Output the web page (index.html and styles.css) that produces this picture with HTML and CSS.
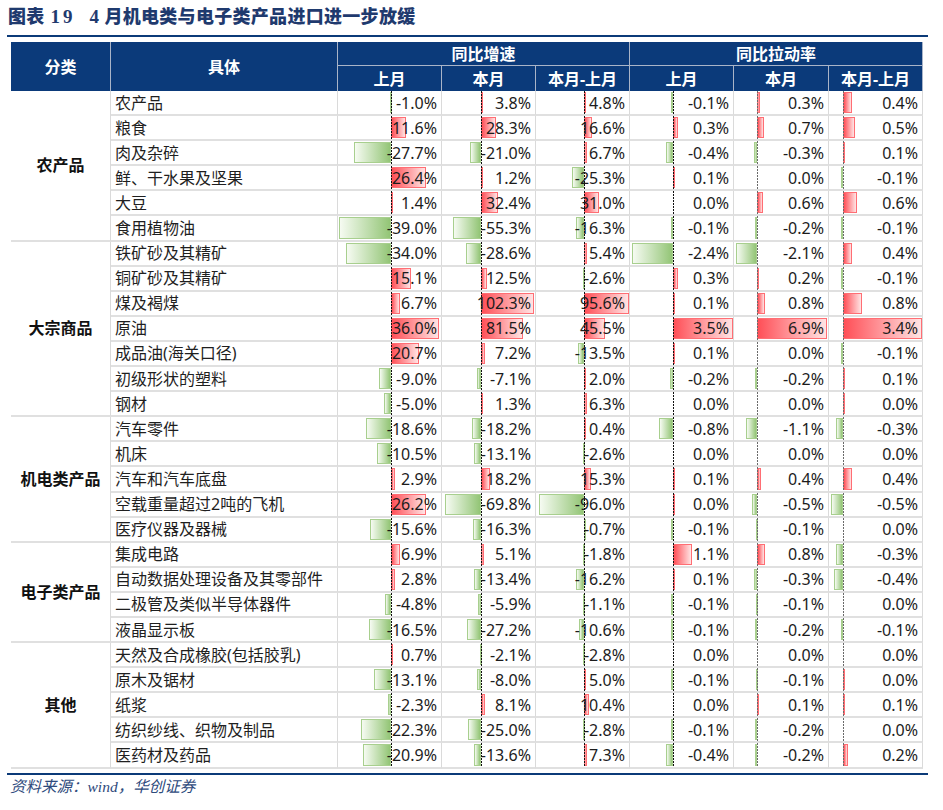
FILE: index.html
```html
<!DOCTYPE html>
<html lang="zh-CN">
<head>
<meta charset="utf-8">
<title>图表 19 4月机电类与电子类产品进口进一步放缓</title>
<link rel="stylesheet" href="styles.css">
</head>
<body>
<div class="page">
  <h1 class="title"><span>图表</span><span class="n1">19</span><span class="n2">4</span>月机电类与电子类产品进口进一步放缓</h1>
  <div class="fig">
    <table class="tbl">
      <colgroup>
        <col class="w-cat"><col class="w-item"><col class="w-a"><col class="w-b"><col class="w-b"><col class="w-a"><col class="w-c"><col class="w-b">
      </colgroup>
      <thead>
        <tr class="h1"><th rowspan="2">分类</th><th rowspan="2">具体</th><th colspan="3" class="grp">同比增速</th><th colspan="3" class="grp">同比拉动率</th></tr>
        <tr class="h2"><th>上月</th><th>本月</th><th>本月-上月</th><th>上月</th><th>本月</th><th>本月-上月</th></tr>
      </thead>
      <tbody>
        <tr class="r"><td class="cat" rowspan="6">农产品</td><td class="item">农产品</td>
          <td class="c1"><div class="dc"><i class="bar neg" style="--v:1.0"></i><i class="ax"></i><span class="val">-1.0%</span></div></td>
          <td class="c2"><div class="dc"><i class="bar pos" style="--v:3.8"></i><i class="ax"></i><span class="val">3.8%</span></div></td>
          <td class="c3"><div class="dc"><i class="bar pos" style="--v:4.8"></i><i class="ax"></i><span class="val">4.8%</span></div></td>
          <td class="c4"><div class="dc"><i class="bar neg" style="--v:0.1"></i><i class="ax"></i><span class="val">-0.1%</span></div></td>
          <td class="c5"><div class="dc"><i class="bar pos" style="--v:0.3"></i><i class="ax"></i><span class="val">0.3%</span></div></td>
          <td class="c6"><div class="dc"><i class="bar pos" style="--v:0.4"></i><i class="ax"></i><span class="val">0.4%</span></div></td></tr>
        <tr class="r"><td class="item">粮食</td>
          <td class="c1"><div class="dc"><i class="bar pos" style="--v:11.6"></i><i class="ax"></i><span class="val">11.6%</span></div></td>
          <td class="c2"><div class="dc"><i class="bar pos" style="--v:28.3"></i><i class="ax"></i><span class="val">28.3%</span></div></td>
          <td class="c3"><div class="dc"><i class="bar pos" style="--v:16.6"></i><i class="ax"></i><span class="val">16.6%</span></div></td>
          <td class="c4"><div class="dc"><i class="bar pos" style="--v:0.3"></i><i class="ax"></i><span class="val">0.3%</span></div></td>
          <td class="c5"><div class="dc"><i class="bar pos" style="--v:0.7"></i><i class="ax"></i><span class="val">0.7%</span></div></td>
          <td class="c6"><div class="dc"><i class="bar pos" style="--v:0.5"></i><i class="ax"></i><span class="val">0.5%</span></div></td></tr>
        <tr class="r"><td class="item">肉及杂碎</td>
          <td class="c1"><div class="dc"><i class="bar neg" style="--v:27.7"></i><i class="ax"></i><span class="val">-27.7%</span></div></td>
          <td class="c2"><div class="dc"><i class="bar neg" style="--v:21.0"></i><i class="ax"></i><span class="val">-21.0%</span></div></td>
          <td class="c3"><div class="dc"><i class="bar pos" style="--v:6.7"></i><i class="ax"></i><span class="val">6.7%</span></div></td>
          <td class="c4"><div class="dc"><i class="bar neg" style="--v:0.4"></i><i class="ax"></i><span class="val">-0.4%</span></div></td>
          <td class="c5"><div class="dc"><i class="bar neg" style="--v:0.3"></i><i class="ax"></i><span class="val">-0.3%</span></div></td>
          <td class="c6"><div class="dc"><i class="bar pos" style="--v:0.1"></i><i class="ax"></i><span class="val">0.1%</span></div></td></tr>
        <tr class="r"><td class="item">鲜、干水果及坚果</td>
          <td class="c1"><div class="dc"><i class="bar pos" style="--v:26.4"></i><i class="ax"></i><span class="val">26.4%</span></div></td>
          <td class="c2"><div class="dc"><i class="bar pos" style="--v:1.2"></i><i class="ax"></i><span class="val">1.2%</span></div></td>
          <td class="c3"><div class="dc"><i class="bar neg" style="--v:25.3"></i><i class="ax"></i><span class="val">-25.3%</span></div></td>
          <td class="c4"><div class="dc"><i class="bar pos" style="--v:0.1"></i><i class="ax"></i><span class="val">0.1%</span></div></td>
          <td class="c5"><div class="dc"><i class="ax"></i><span class="val">0.0%</span></div></td>
          <td class="c6"><div class="dc"><i class="bar neg" style="--v:0.1"></i><i class="ax"></i><span class="val">-0.1%</span></div></td></tr>
        <tr class="r"><td class="item">大豆</td>
          <td class="c1"><div class="dc"><i class="bar pos" style="--v:1.4"></i><i class="ax"></i><span class="val">1.4%</span></div></td>
          <td class="c2"><div class="dc"><i class="bar pos" style="--v:32.4"></i><i class="ax"></i><span class="val">32.4%</span></div></td>
          <td class="c3"><div class="dc"><i class="bar pos" style="--v:31.0"></i><i class="ax"></i><span class="val">31.0%</span></div></td>
          <td class="c4"><div class="dc"><i class="ax"></i><span class="val">0.0%</span></div></td>
          <td class="c5"><div class="dc"><i class="bar pos" style="--v:0.6"></i><i class="ax"></i><span class="val">0.6%</span></div></td>
          <td class="c6"><div class="dc"><i class="bar pos" style="--v:0.6"></i><i class="ax"></i><span class="val">0.6%</span></div></td></tr>
        <tr class="r"><td class="item">食用植物油</td>
          <td class="c1"><div class="dc"><i class="bar neg" style="--v:39.0"></i><i class="ax"></i><span class="val">-39.0%</span></div></td>
          <td class="c2"><div class="dc"><i class="bar neg" style="--v:55.3"></i><i class="ax"></i><span class="val">-55.3%</span></div></td>
          <td class="c3"><div class="dc"><i class="bar neg" style="--v:16.3"></i><i class="ax"></i><span class="val">-16.3%</span></div></td>
          <td class="c4"><div class="dc"><i class="bar neg" style="--v:0.1"></i><i class="ax"></i><span class="val">-0.1%</span></div></td>
          <td class="c5"><div class="dc"><i class="bar neg" style="--v:0.2"></i><i class="ax"></i><span class="val">-0.2%</span></div></td>
          <td class="c6"><div class="dc"><i class="bar neg" style="--v:0.1"></i><i class="ax"></i><span class="val">-0.1%</span></div></td></tr>

        <tr class="r"><td class="cat" rowspan="7">大宗商品</td><td class="item">铁矿砂及其精矿</td>
          <td class="c1"><div class="dc"><i class="bar neg" style="--v:34.0"></i><i class="ax"></i><span class="val">-34.0%</span></div></td>
          <td class="c2"><div class="dc"><i class="bar neg" style="--v:28.6"></i><i class="ax"></i><span class="val">-28.6%</span></div></td>
          <td class="c3"><div class="dc"><i class="bar pos" style="--v:5.4"></i><i class="ax"></i><span class="val">5.4%</span></div></td>
          <td class="c4"><div class="dc"><i class="bar neg" style="--v:2.4"></i><i class="ax"></i><span class="val">-2.4%</span></div></td>
          <td class="c5"><div class="dc"><i class="bar neg" style="--v:2.1"></i><i class="ax"></i><span class="val">-2.1%</span></div></td>
          <td class="c6"><div class="dc"><i class="bar pos" style="--v:0.4"></i><i class="ax"></i><span class="val">0.4%</span></div></td></tr>
        <tr class="r"><td class="item">铜矿砂及其精矿</td>
          <td class="c1"><div class="dc"><i class="bar pos" style="--v:15.1"></i><i class="ax"></i><span class="val">15.1%</span></div></td>
          <td class="c2"><div class="dc"><i class="bar pos" style="--v:12.5"></i><i class="ax"></i><span class="val">12.5%</span></div></td>
          <td class="c3"><div class="dc"><i class="bar neg" style="--v:2.6"></i><i class="ax"></i><span class="val">-2.6%</span></div></td>
          <td class="c4"><div class="dc"><i class="bar pos" style="--v:0.3"></i><i class="ax"></i><span class="val">0.3%</span></div></td>
          <td class="c5"><div class="dc"><i class="bar pos" style="--v:0.2"></i><i class="ax"></i><span class="val">0.2%</span></div></td>
          <td class="c6"><div class="dc"><i class="bar neg" style="--v:0.1"></i><i class="ax"></i><span class="val">-0.1%</span></div></td></tr>
        <tr class="r"><td class="item">煤及褐煤</td>
          <td class="c1"><div class="dc"><i class="bar pos" style="--v:6.7"></i><i class="ax"></i><span class="val">6.7%</span></div></td>
          <td class="c2"><div class="dc"><i class="bar pos" style="--v:102.3"></i><i class="ax"></i><span class="val">102.3%</span></div></td>
          <td class="c3"><div class="dc"><i class="bar pos" style="--v:95.6"></i><i class="ax"></i><span class="val">95.6%</span></div></td>
          <td class="c4"><div class="dc"><i class="bar pos" style="--v:0.1"></i><i class="ax"></i><span class="val">0.1%</span></div></td>
          <td class="c5"><div class="dc"><i class="bar pos" style="--v:0.8"></i><i class="ax"></i><span class="val">0.8%</span></div></td>
          <td class="c6"><div class="dc"><i class="bar pos" style="--v:0.8"></i><i class="ax"></i><span class="val">0.8%</span></div></td></tr>
        <tr class="r"><td class="item">原油</td>
          <td class="c1"><div class="dc"><i class="bar pos" style="--v:36.0"></i><i class="ax"></i><span class="val">36.0%</span></div></td>
          <td class="c2"><div class="dc"><i class="bar pos" style="--v:81.5"></i><i class="ax"></i><span class="val">81.5%</span></div></td>
          <td class="c3"><div class="dc"><i class="bar pos" style="--v:45.5"></i><i class="ax"></i><span class="val">45.5%</span></div></td>
          <td class="c4"><div class="dc"><i class="bar pos" style="--v:3.5"></i><i class="ax"></i><span class="val">3.5%</span></div></td>
          <td class="c5"><div class="dc"><i class="bar pos" style="--v:6.9"></i><i class="ax"></i><span class="val">6.9%</span></div></td>
          <td class="c6"><div class="dc"><i class="bar pos" style="--v:3.4"></i><i class="ax"></i><span class="val">3.4%</span></div></td></tr>
        <tr class="r"><td class="item">成品油(海关口径)</td>
          <td class="c1"><div class="dc"><i class="bar pos" style="--v:20.7"></i><i class="ax"></i><span class="val">20.7%</span></div></td>
          <td class="c2"><div class="dc"><i class="bar pos" style="--v:7.2"></i><i class="ax"></i><span class="val">7.2%</span></div></td>
          <td class="c3"><div class="dc"><i class="bar neg" style="--v:13.5"></i><i class="ax"></i><span class="val">-13.5%</span></div></td>
          <td class="c4"><div class="dc"><i class="bar pos" style="--v:0.1"></i><i class="ax"></i><span class="val">0.1%</span></div></td>
          <td class="c5"><div class="dc"><i class="ax"></i><span class="val">0.0%</span></div></td>
          <td class="c6"><div class="dc"><i class="bar neg" style="--v:0.1"></i><i class="ax"></i><span class="val">-0.1%</span></div></td></tr>
        <tr class="r"><td class="item">初级形状的塑料</td>
          <td class="c1"><div class="dc"><i class="bar neg" style="--v:9.0"></i><i class="ax"></i><span class="val">-9.0%</span></div></td>
          <td class="c2"><div class="dc"><i class="bar neg" style="--v:7.1"></i><i class="ax"></i><span class="val">-7.1%</span></div></td>
          <td class="c3"><div class="dc"><i class="bar pos" style="--v:2.0"></i><i class="ax"></i><span class="val">2.0%</span></div></td>
          <td class="c4"><div class="dc"><i class="bar neg" style="--v:0.2"></i><i class="ax"></i><span class="val">-0.2%</span></div></td>
          <td class="c5"><div class="dc"><i class="bar neg" style="--v:0.2"></i><i class="ax"></i><span class="val">-0.2%</span></div></td>
          <td class="c6"><div class="dc"><i class="bar pos" style="--v:0.1"></i><i class="ax"></i><span class="val">0.1%</span></div></td></tr>
        <tr class="r"><td class="item">钢材</td>
          <td class="c1"><div class="dc"><i class="bar neg" style="--v:5.0"></i><i class="ax"></i><span class="val">-5.0%</span></div></td>
          <td class="c2"><div class="dc"><i class="bar pos" style="--v:1.3"></i><i class="ax"></i><span class="val">1.3%</span></div></td>
          <td class="c3"><div class="dc"><i class="bar pos" style="--v:6.3"></i><i class="ax"></i><span class="val">6.3%</span></div></td>
          <td class="c4"><div class="dc"><i class="ax"></i><span class="val">0.0%</span></div></td>
          <td class="c5"><div class="dc"><i class="ax"></i><span class="val">0.0%</span></div></td>
          <td class="c6"><div class="dc"><i class="bar pos" style="--v:0.04"></i><i class="ax"></i><span class="val">0.0%</span></div></td></tr>

        <tr class="r"><td class="cat" rowspan="5">机电类产品</td><td class="item">汽车零件</td>
          <td class="c1"><div class="dc"><i class="bar neg" style="--v:18.6"></i><i class="ax"></i><span class="val">-18.6%</span></div></td>
          <td class="c2"><div class="dc"><i class="bar neg" style="--v:18.2"></i><i class="ax"></i><span class="val">-18.2%</span></div></td>
          <td class="c3"><div class="dc"><i class="bar pos" style="--v:0.4"></i><i class="ax"></i><span class="val">0.4%</span></div></td>
          <td class="c4"><div class="dc"><i class="bar neg" style="--v:0.8"></i><i class="ax"></i><span class="val">-0.8%</span></div></td>
          <td class="c5"><div class="dc"><i class="bar neg" style="--v:1.1"></i><i class="ax"></i><span class="val">-1.1%</span></div></td>
          <td class="c6"><div class="dc"><i class="bar neg" style="--v:0.3"></i><i class="ax"></i><span class="val">-0.3%</span></div></td></tr>
        <tr class="r"><td class="item">机床</td>
          <td class="c1"><div class="dc"><i class="bar neg" style="--v:10.5"></i><i class="ax"></i><span class="val">-10.5%</span></div></td>
          <td class="c2"><div class="dc"><i class="bar neg" style="--v:13.1"></i><i class="ax"></i><span class="val">-13.1%</span></div></td>
          <td class="c3"><div class="dc"><i class="bar neg" style="--v:2.6"></i><i class="ax"></i><span class="val">-2.6%</span></div></td>
          <td class="c4"><div class="dc"><i class="ax"></i><span class="val">0.0%</span></div></td>
          <td class="c5"><div class="dc"><i class="ax"></i><span class="val">0.0%</span></div></td>
          <td class="c6"><div class="dc"><i class="ax"></i><span class="val">0.0%</span></div></td></tr>
        <tr class="r"><td class="item">汽车和汽车底盘</td>
          <td class="c1"><div class="dc"><i class="bar pos" style="--v:2.9"></i><i class="ax"></i><span class="val">2.9%</span></div></td>
          <td class="c2"><div class="dc"><i class="bar pos" style="--v:18.2"></i><i class="ax"></i><span class="val">18.2%</span></div></td>
          <td class="c3"><div class="dc"><i class="bar pos" style="--v:15.3"></i><i class="ax"></i><span class="val">15.3%</span></div></td>
          <td class="c4"><div class="dc"><i class="bar pos" style="--v:0.1"></i><i class="ax"></i><span class="val">0.1%</span></div></td>
          <td class="c5"><div class="dc"><i class="bar pos" style="--v:0.4"></i><i class="ax"></i><span class="val">0.4%</span></div></td>
          <td class="c6"><div class="dc"><i class="bar pos" style="--v:0.4"></i><i class="ax"></i><span class="val">0.4%</span></div></td></tr>
        <tr class="r"><td class="item">空载重量超过2吨的飞机</td>
          <td class="c1"><div class="dc"><i class="bar pos" style="--v:26.2"></i><i class="ax"></i><span class="val">26.2%</span></div></td>
          <td class="c2"><div class="dc"><i class="bar neg" style="--v:69.8"></i><i class="ax"></i><span class="val">-69.8%</span></div></td>
          <td class="c3"><div class="dc"><i class="bar neg" style="--v:96.0"></i><i class="ax"></i><span class="val">-96.0%</span></div></td>
          <td class="c4"><div class="dc"><i class="bar pos" style="--v:0.04"></i><i class="ax"></i><span class="val">0.0%</span></div></td>
          <td class="c5"><div class="dc"><i class="bar neg" style="--v:0.5"></i><i class="ax"></i><span class="val">-0.5%</span></div></td>
          <td class="c6"><div class="dc"><i class="bar neg" style="--v:0.5"></i><i class="ax"></i><span class="val">-0.5%</span></div></td></tr>
        <tr class="r"><td class="item">医疗仪器及器械</td>
          <td class="c1"><div class="dc"><i class="bar neg" style="--v:15.6"></i><i class="ax"></i><span class="val">-15.6%</span></div></td>
          <td class="c2"><div class="dc"><i class="bar neg" style="--v:16.3"></i><i class="ax"></i><span class="val">-16.3%</span></div></td>
          <td class="c3"><div class="dc"><i class="bar neg" style="--v:0.7"></i><i class="ax"></i><span class="val">-0.7%</span></div></td>
          <td class="c4"><div class="dc"><i class="bar neg" style="--v:0.1"></i><i class="ax"></i><span class="val">-0.1%</span></div></td>
          <td class="c5"><div class="dc"><i class="bar neg" style="--v:0.1"></i><i class="ax"></i><span class="val">-0.1%</span></div></td>
          <td class="c6"><div class="dc"><i class="ax"></i><span class="val">0.0%</span></div></td></tr>

        <tr class="r"><td class="cat" rowspan="4">电子类产品</td><td class="item">集成电路</td>
          <td class="c1"><div class="dc"><i class="bar pos" style="--v:6.9"></i><i class="ax"></i><span class="val">6.9%</span></div></td>
          <td class="c2"><div class="dc"><i class="bar pos" style="--v:5.1"></i><i class="ax"></i><span class="val">5.1%</span></div></td>
          <td class="c3"><div class="dc"><i class="bar neg" style="--v:1.8"></i><i class="ax"></i><span class="val">-1.8%</span></div></td>
          <td class="c4"><div class="dc"><i class="bar pos" style="--v:1.1"></i><i class="ax"></i><span class="val">1.1%</span></div></td>
          <td class="c5"><div class="dc"><i class="bar pos" style="--v:0.8"></i><i class="ax"></i><span class="val">0.8%</span></div></td>
          <td class="c6"><div class="dc"><i class="bar neg" style="--v:0.3"></i><i class="ax"></i><span class="val">-0.3%</span></div></td></tr>
        <tr class="r"><td class="item">自动数据处理设备及其零部件</td>
          <td class="c1"><div class="dc"><i class="bar pos" style="--v:2.8"></i><i class="ax"></i><span class="val">2.8%</span></div></td>
          <td class="c2"><div class="dc"><i class="bar neg" style="--v:13.4"></i><i class="ax"></i><span class="val">-13.4%</span></div></td>
          <td class="c3"><div class="dc"><i class="bar neg" style="--v:16.2"></i><i class="ax"></i><span class="val">-16.2%</span></div></td>
          <td class="c4"><div class="dc"><i class="bar pos" style="--v:0.1"></i><i class="ax"></i><span class="val">0.1%</span></div></td>
          <td class="c5"><div class="dc"><i class="bar neg" style="--v:0.3"></i><i class="ax"></i><span class="val">-0.3%</span></div></td>
          <td class="c6"><div class="dc"><i class="bar neg" style="--v:0.4"></i><i class="ax"></i><span class="val">-0.4%</span></div></td></tr>
        <tr class="r"><td class="item">二极管及类似半导体器件</td>
          <td class="c1"><div class="dc"><i class="bar neg" style="--v:4.8"></i><i class="ax"></i><span class="val">-4.8%</span></div></td>
          <td class="c2"><div class="dc"><i class="bar neg" style="--v:5.9"></i><i class="ax"></i><span class="val">-5.9%</span></div></td>
          <td class="c3"><div class="dc"><i class="bar neg" style="--v:1.1"></i><i class="ax"></i><span class="val">-1.1%</span></div></td>
          <td class="c4"><div class="dc"><i class="bar neg" style="--v:0.1"></i><i class="ax"></i><span class="val">-0.1%</span></div></td>
          <td class="c5"><div class="dc"><i class="bar neg" style="--v:0.1"></i><i class="ax"></i><span class="val">-0.1%</span></div></td>
          <td class="c6"><div class="dc"><i class="ax"></i><span class="val">0.0%</span></div></td></tr>
        <tr class="r"><td class="item">液晶显示板</td>
          <td class="c1"><div class="dc"><i class="bar neg" style="--v:16.5"></i><i class="ax"></i><span class="val">-16.5%</span></div></td>
          <td class="c2"><div class="dc"><i class="bar neg" style="--v:27.2"></i><i class="ax"></i><span class="val">-27.2%</span></div></td>
          <td class="c3"><div class="dc"><i class="bar neg" style="--v:10.6"></i><i class="ax"></i><span class="val">-10.6%</span></div></td>
          <td class="c4"><div class="dc"><i class="bar neg" style="--v:0.1"></i><i class="ax"></i><span class="val">-0.1%</span></div></td>
          <td class="c5"><div class="dc"><i class="bar neg" style="--v:0.2"></i><i class="ax"></i><span class="val">-0.2%</span></div></td>
          <td class="c6"><div class="dc"><i class="bar neg" style="--v:0.1"></i><i class="ax"></i><span class="val">-0.1%</span></div></td></tr>

        <tr class="r"><td class="cat" rowspan="5">其他</td><td class="item">天然及合成橡胶(包括胶乳)</td>
          <td class="c1"><div class="dc"><i class="bar pos" style="--v:0.7"></i><i class="ax"></i><span class="val">0.7%</span></div></td>
          <td class="c2"><div class="dc"><i class="bar neg" style="--v:2.1"></i><i class="ax"></i><span class="val">-2.1%</span></div></td>
          <td class="c3"><div class="dc"><i class="bar neg" style="--v:2.8"></i><i class="ax"></i><span class="val">-2.8%</span></div></td>
          <td class="c4"><div class="dc"><i class="ax"></i><span class="val">0.0%</span></div></td>
          <td class="c5"><div class="dc"><i class="ax"></i><span class="val">0.0%</span></div></td>
          <td class="c6"><div class="dc"><i class="ax"></i><span class="val">0.0%</span></div></td></tr>
        <tr class="r"><td class="item">原木及锯材</td>
          <td class="c1"><div class="dc"><i class="bar neg" style="--v:13.1"></i><i class="ax"></i><span class="val">-13.1%</span></div></td>
          <td class="c2"><div class="dc"><i class="bar neg" style="--v:8.0"></i><i class="ax"></i><span class="val">-8.0%</span></div></td>
          <td class="c3"><div class="dc"><i class="bar pos" style="--v:5.0"></i><i class="ax"></i><span class="val">5.0%</span></div></td>
          <td class="c4"><div class="dc"><i class="bar neg" style="--v:0.1"></i><i class="ax"></i><span class="val">-0.1%</span></div></td>
          <td class="c5"><div class="dc"><i class="bar neg" style="--v:0.1"></i><i class="ax"></i><span class="val">-0.1%</span></div></td>
          <td class="c6"><div class="dc"><i class="bar pos" style="--v:0.04"></i><i class="ax"></i><span class="val">0.0%</span></div></td></tr>
        <tr class="r"><td class="item">纸浆</td>
          <td class="c1"><div class="dc"><i class="bar neg" style="--v:2.3"></i><i class="ax"></i><span class="val">-2.3%</span></div></td>
          <td class="c2"><div class="dc"><i class="bar pos" style="--v:8.1"></i><i class="ax"></i><span class="val">8.1%</span></div></td>
          <td class="c3"><div class="dc"><i class="bar pos" style="--v:10.4"></i><i class="ax"></i><span class="val">10.4%</span></div></td>
          <td class="c4"><div class="dc"><i class="ax"></i><span class="val">0.0%</span></div></td>
          <td class="c5"><div class="dc"><i class="bar pos" style="--v:0.1"></i><i class="ax"></i><span class="val">0.1%</span></div></td>
          <td class="c6"><div class="dc"><i class="bar pos" style="--v:0.1"></i><i class="ax"></i><span class="val">0.1%</span></div></td></tr>
        <tr class="r"><td class="item">纺织纱线、织物及制品</td>
          <td class="c1"><div class="dc"><i class="bar neg" style="--v:22.3"></i><i class="ax"></i><span class="val">-22.3%</span></div></td>
          <td class="c2"><div class="dc"><i class="bar neg" style="--v:25.0"></i><i class="ax"></i><span class="val">-25.0%</span></div></td>
          <td class="c3"><div class="dc"><i class="bar neg" style="--v:2.8"></i><i class="ax"></i><span class="val">-2.8%</span></div></td>
          <td class="c4"><div class="dc"><i class="bar neg" style="--v:0.1"></i><i class="ax"></i><span class="val">-0.1%</span></div></td>
          <td class="c5"><div class="dc"><i class="bar neg" style="--v:0.2"></i><i class="ax"></i><span class="val">-0.2%</span></div></td>
          <td class="c6"><div class="dc"><i class="ax"></i><span class="val">0.0%</span></div></td></tr>
        <tr class="r"><td class="item">医药材及药品</td>
          <td class="c1"><div class="dc"><i class="bar neg" style="--v:20.9"></i><i class="ax"></i><span class="val">-20.9%</span></div></td>
          <td class="c2"><div class="dc"><i class="bar neg" style="--v:13.6"></i><i class="ax"></i><span class="val">-13.6%</span></div></td>
          <td class="c3"><div class="dc"><i class="bar pos" style="--v:7.3"></i><i class="ax"></i><span class="val">7.3%</span></div></td>
          <td class="c4"><div class="dc"><i class="bar neg" style="--v:0.4"></i><i class="ax"></i><span class="val">-0.4%</span></div></td>
          <td class="c5"><div class="dc"><i class="bar neg" style="--v:0.2"></i><i class="ax"></i><span class="val">-0.2%</span></div></td>
          <td class="c6"><div class="dc"><i class="bar pos" style="--v:0.2"></i><i class="ax"></i><span class="val">0.2%</span></div></td></tr>
      </tbody>
    </table>
  </div>
  <p class="src">资料来源：wind，华创证券</p>
</div>
</body>
</html>
```

FILE: styles.css
```css
* { box-sizing: border-box; }

body {
  margin: 0;
  background: #ffffff;
  font-family: "Noto Sans", "Noto Sans CJK SC", sans-serif;
  color: #1c1c1c;
}

.page {
  width: 943px;
  padding: 4px 0 0 7px;
}

.title {
  margin: 0;
  width: 921px;
  padding: 0 0 5px 1px;
  border-bottom: 2px solid #0b3a78;
  font-family: "Liberation Serif", "Noto Sans CJK SC", serif;
  font-size: 18px;
  line-height: 26px;
  font-weight: 900;
  color: #1f3a6e;
  letter-spacing: 0.3px;
  white-space: nowrap;
}

.title .n1 {
  margin-left: 6px;
  font-size: 19px;
  letter-spacing: 3px;
}

.title .n2 {
  margin-left: 14px;
  margin-right: 5px;
  font-size: 19px;
}

.fig {
  width: 921px;
  padding: 5px 0 4px 4px;
  border-bottom: 2px solid #0b3a78;
}

.tbl {
  width: 912px;
  table-layout: fixed;
  border-collapse: separate;
  border-spacing: 0;
}

.w-cat { width: 100px; }
.w-item { width: 227px; }
.w-a { width: 104px; }
.w-b { width: 94px; }
.w-c { width: 95px; }

th {
  padding: 0;
  background: #0b3a7a;
  color: #ffffff;
  font-family: "Noto Sans", "Noto Sans CJK SC", sans-serif;
  font-size: 16px;
  font-weight: bold;
  text-align: center;
  vertical-align: middle;
  border-right: 1px solid #a9b4c8;
  line-height: 20px;
}

th.grp { border-bottom: 1px solid #a9b4c8; }

tr.h1 { height: 24px; }
tr.h2 { height: 25px; }
tr.r { height: 25.1px; }

td {
  padding: 0;
  border-right: 1px solid #dadada;
  border-bottom: 2px solid #e0e0e0;
  font-size: 16px;
  line-height: 20px;
  vertical-align: middle;
}

td.cat {
  text-align: center;
  font-weight: bold;
  color: #111111;
}

td.item {
  padding-left: 4px;
  white-space: nowrap;
  color: #1f1f1f;
}

.c1 { --ax: 53px; --s: 1.333px; }
.c2 { --ax: 39px; --s: 0.514px; }
.c3 { --ax: 48px; --s: 0.47px; }
.c4 { --ax: 43px; --s: 17px; }
.c5 { --ax: 23px; --s: 10.14px; }
.c6 { --ax: 14px; --s: 23.2px; }

.dc {
  display: grid;
  height: 23.1px;
}

.dc > * { grid-area: 1 / 1; }

.bar {
  justify-self: start;
  align-self: stretch;
  margin-top: 1px;
  margin-bottom: 1px;
  width: calc(var(--v) * var(--s));
  border: 1px solid;
}

.pos {
  margin-left: var(--ax);
  background: linear-gradient(to right, #ff4f57, #ffe4e4);
  border-color: #ff6e74;
}

.neg {
  margin-left: calc(var(--ax) - var(--v) * var(--s));
  background: linear-gradient(to right, #f6fbf2, #93c576);
  border-color: #a8cf8e;
}

.ax {
  justify-self: start;
  align-self: stretch;
  margin-left: var(--ax);
  width: 1px;
  background: repeating-linear-gradient(to bottom, #111111 0 2px, transparent 2px 3px);
}

.c5 .ax, .c6 .ax {
  background: repeating-linear-gradient(to bottom, #6a6a6a 0 2px, transparent 2px 3px);
}

.val {
  justify-self: end;
  align-self: center;
  padding-right: 4px;
  color: #1c1c1c;
}

.src {
  margin: 0;
  padding: 3px 0 0 3px;
  font-family: "Liberation Serif", "Noto Sans CJK SC", serif;
  font-style: italic;
  font-size: 15.5px;
  line-height: 18px;
  color: #2e4a7c;
}
```
